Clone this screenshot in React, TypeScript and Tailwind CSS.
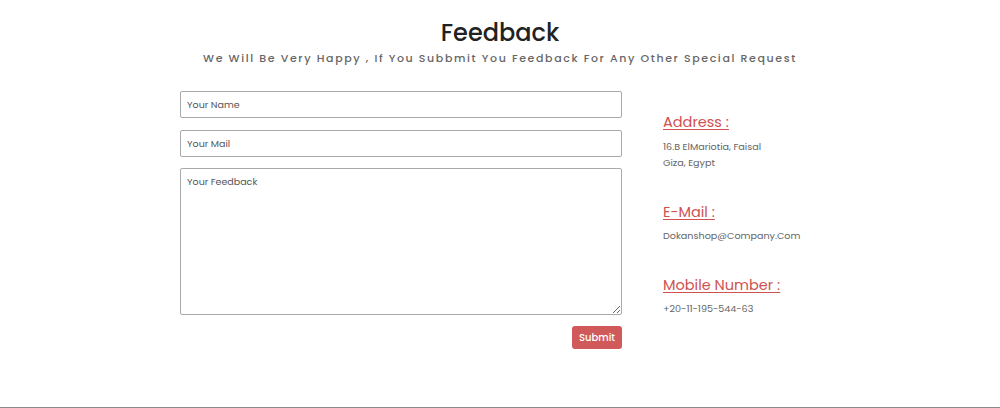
import React from "react";

export default function App() {
  const font = { fontFamily: "Poppins, 'Open Sans', 'Liberation Sans', sans-serif" };
  return (
    <div className="w-full h-[408px] bg-white flex flex-col border-b border-[#8a8a8a]" style={font}>
      <div className="flex flex-col items-center pt-[15px]">
        <h1 className="text-[24px] leading-[36px] text-[#222] font-medium">Feedback</h1>
        <p className="mt-[-1px] text-[11px] leading-[16px] tracking-[1.62px] text-[#666] font-medium">
          We Will Be Very Happy , If You Subbmit You Feedback For Any Other Special Request
        </p>
      </div>
      <div className="flex justify-center mt-[25px]">
        <div className="w-[640px] flex gap-[41px]">
          <form className="w-[442px] flex flex-col" onSubmit={(e) => e.preventDefault()}>
            <input
              className="h-[27px] border border-[#aaa] rounded-[2px] px-[6px] text-[9.5px] text-[#333] placeholder:text-[#555] outline-none"
              placeholder="Your Name"
            />
            <input
              className="mt-[12px] h-[27px] border border-[#aaa] rounded-[2px] px-[6px] text-[9.5px] text-[#333] placeholder:text-[#555] outline-none"
              placeholder="Your Mail"
            />
            <textarea
              className="mt-[11px] h-[147px] border border-[#aaa] rounded-[2px] px-[6px] py-[6px] text-[9.5px] leading-[14px] text-[#333] placeholder:text-[#555] outline-none"
              placeholder="Your Feedback"
            />
            <div className="flex justify-end mt-[11px]">
              <button className="w-[50px] h-[23px] bg-[#d05a5a] rounded-[3px] text-white text-[10px] font-medium">
                Submit
              </button>
            </div>
          </form>
          <div className="flex-1 pt-[21px] flex flex-col">
            <h3 className="text-[14.5px] leading-[20px] text-[#cf5151] underline underline-offset-[2px]">Address :</h3>
            <p className="mt-[7px] text-[9.6px] leading-[16px] text-[#666]">16.B ElMariotia, Faisal</p>
            <p className="text-[9.6px] leading-[16px] text-[#666]">Giza, Egypt</p>
            <h3 className="mt-[31px] text-[14.5px] leading-[20px] text-[#cf5151] underline underline-offset-[2px]">E-Mail :</h3>
            <p className="mt-[6px] text-[9.6px] leading-[16px] text-[#666]">Dokanshop@Company.Com</p>
            <h3 className="mt-[31px] text-[14.5px] leading-[20px] text-[#cf5151] underline underline-offset-[2px]">Mobile Number :</h3>
            <p className="mt-[6px] text-[9.6px] leading-[16px] text-[#666]">+20-11-195-544-63</p>
          </div>
        </div>
      </div>
    </div>
  );
}
